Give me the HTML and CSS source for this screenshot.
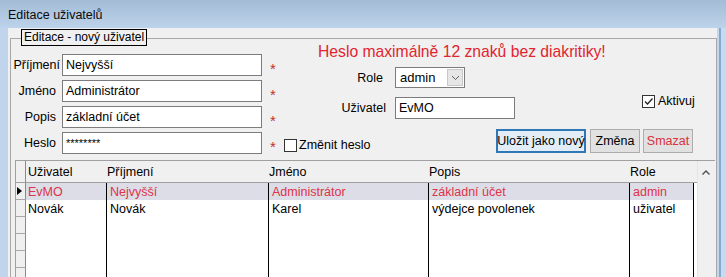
FILE: index.html
```html
<!DOCTYPE html>
<html lang="cs">
<head>
<meta charset="utf-8">
<title>Editace uživatelů</title>
<link rel="stylesheet" href="styles.css">
</head>
<body>
<div class="window">
  <div class="titlebar">Editace uživatelů</div>
  <div class="frame">
    <div class="client">
      <div class="group">
        <div class="legend">Editace - nový uživatel</div>
        <div class="form">
          <div class="left">
            <div class="frow"><span class="flabel tight">Příjmení</span><div class="input w200">Nejvyšší</div><span class="req">*</span></div>
            <div class="frow"><span class="flabel">Jméno</span><div class="input w200">Administrátor</div><span class="req">*</span></div>
            <div class="frow"><span class="flabel">Popis</span><div class="input w200">základní účet</div><span class="req">*</span></div>
            <div class="frow"><span class="flabel">Heslo</span><div class="input w200 pwd">********</div><span class="req">*</span></div>
          </div>
          <div class="right">
            <div class="heading">Heslo maximálně 12 znaků bez diakritiky!</div>
            <div class="rrow role-row">
              <span class="rlabel role-label">Role</span>
              <div class="select">
                <span class="select-val">admin</span>
                <span class="dd-btn"><svg width="9" height="6" viewBox="0 0 9 6"><path d="M1 1 L4.5 4.5 L8 1" fill="none" stroke="#606060" stroke-width="1"/></svg></span>
              </div>
            </div>
            <div class="rrow user-row">
              <span class="rlabel user-label">Uživatel</span>
              <div class="input w120">EvMO</div>
              <label class="chk aktivuj"><span class="box"><svg width="11" height="11" viewBox="0 0 11 11"><path d="M2 5.5 L4.5 8 L9.5 2.5" fill="none" stroke="#222" stroke-width="1.3"/></svg></span><span>Aktivuj</span></label>
            </div>
            <div class="rrow btn-row">
              <label class="chk zmenit"><span class="box"></span><span>Změnit heslo</span></label>
              <div class="buttons">
                <div class="btn primary">Uložit jako nový</div>
                <div class="btn zmena">Změna</div>
                <div class="btn danger">Smazat</div>
              </div>
            </div>
          </div>
        </div>
        <div class="dbwrap">
          <div class="db">
            <div class="hd ind"></div>
            <div class="hd first">Uživatel</div>
            <div class="hd">Příjmení</div>
            <div class="hd">Jméno</div>
            <div class="hd">Popis</div>
            <div class="hd">Role</div>
            <div class="hd"></div>

            <div class="ind"><svg width="5" height="8" viewBox="0 0 5 8"><path d="M0 0 L5 4 L0 8 Z" fill="#000"/></svg></div>
            <div class="cell first sel">EvMO</div>
            <div class="cell sep sel">Nejvyšší</div>
            <div class="cell sep sel">Administrátor</div>
            <div class="cell sep sel">základní účet</div>
            <div class="cell sep last sel">admin</div>
            <div class="cell"></div>

            <div class="ind"></div>
            <div class="cell first">Novák</div>
            <div class="cell sep">Novák</div>
            <div class="cell sep">Karel</div>
            <div class="cell sep">výdejce povolenek</div>
            <div class="cell sep last">uživatel</div>
            <div class="cell"></div>

            <div class="ind"></div><div class="cell first"></div><div class="cell sep"></div><div class="cell sep"></div><div class="cell sep"></div><div class="cell sep last"></div><div class="cell"></div>
            <div class="ind"></div><div class="cell first"></div><div class="cell sep"></div><div class="cell sep"></div><div class="cell sep"></div><div class="cell sep last"></div><div class="cell"></div>
            <div class="ind"></div><div class="cell first"></div><div class="cell sep"></div><div class="cell sep"></div><div class="cell sep"></div><div class="cell sep last"></div><div class="cell"></div>
            <div class="ind"></div><div class="cell first"></div><div class="cell sep"></div><div class="cell sep"></div><div class="cell sep"></div><div class="cell sep last"></div><div class="cell"></div>
          </div>
          <div class="sb"><svg width="8" height="5" viewBox="0 0 8 5"><path d="M0.5 4.5 L4 1 L7.5 4.5" fill="none" stroke="#505050" stroke-width="1.4"/></svg></div>
        </div>
      </div>
    </div>
  </div>
</div>
</body>
</html>
```
FILE: styles.css
```css
* { box-sizing: border-box; }
html, body { margin: 0; padding: 0; }
body {
  width: 726px;
  height: 277px;
  overflow: hidden;
  font-family: "Liberation Sans", Arial, sans-serif;
  font-size: 12.5px;
  color: #000;
  background: #c3d7ee;
}
.window {
  width: 726px;
  height: 277px;
  display: flex;
  flex-direction: column;
}
.titlebar {
  height: 28px;
  flex: none;
  background: linear-gradient(#a3bbd6, #bdd3eb);
  padding: 2px 0 0 8px;
  display: flex;
  align-items: center;
  font-size: 12.5px;
  color: #0a0a0a;
}
.frame {
  flex: 1;
  min-height: 0;
  display: flex;
  padding: 0 9px 0 8px;
  background: #c2d7ee;
  box-shadow: inset -5px 0 0 #c6daf0, inset -7px 0 0 #86a9cf, inset 8px 0 0 #c0d5ec;
}
.client {
  flex: 1;
  min-width: 0;
  background: #f0f0f0;
  display: flex;
  flex-direction: column;
}
.group {
  position: relative;
  flex: 1;
  min-height: 0;
  margin: 10px 0 0 2px;
  border: 1px solid #a8a8a8;
  border-bottom: none;
  display: flex;
  flex-direction: column;
}
.legend {
  position: absolute;
  left: 10px;
  top: -10px;
  height: 17px;
  padding: 0 2px;
  border: 1px solid #000;
  background: #f0f0f0;
  font-size: 12px;
  line-height: 15px;
  white-space: nowrap;
}
.form {
  height: 121px;
  flex: none;
  display: flex;
}
.left {
  width: 269px;
  flex: none;
  padding-top: 15px;
  display: flex;
  flex-direction: column;
  gap: 4px;
}
.frow {
  height: 22px;
  display: flex;
  align-items: center;
}
.flabel {
  width: 51px;
  flex: none;
  text-align: right;
  padding-right: 6px;
  white-space: nowrap;
}
.flabel.tight { padding-right: 2px; }
.input {
  height: 22px;
  flex: none;
  border: 1px solid #7c7c7c;
  background: #fff;
  padding-left: 3px;
  display: flex;
  align-items: center;
  white-space: nowrap;
}
.input.pwd { font-size: 11px; }
.w200 { width: 200px; }
.w120 { width: 120px; }
.req {
  color: #c0312e;
  margin-left: 8px;
  font-size: 15px;
  margin-top: 6px;
}
.right {
  flex: 1;
  display: flex;
  flex-direction: column;
}
.heading {
  margin-top: 4px;
  padding-left: 38px;
  color: #e1252f;
  font-size: 15.7px;
  line-height: 18px;
  white-space: nowrap;
}
.rrow {
  display: flex;
  align-items: center;
}
.role-row { margin-top: 6px; height: 21px; }
.user-row { margin-top: 9px; height: 22px; }
.btn-row { margin-top: 10px; height: 24px; }
.rlabel { text-align: right; flex: none; }
.role-label { width: 103px; margin-right: 12px; }
.user-label { width: 106px; margin-right: 9px; }
.select {
  width: 70px;
  height: 21px;
  border: 1px solid #7c7c7c;
  background: #fff;
  display: flex;
  align-items: stretch;
}
.select-val {
  flex: 1;
  padding-left: 4px;
  display: flex;
  align-items: center;
  font-size: 13px;
}
.dd-btn {
  width: 16px;
  margin: 1px;
  background: #e6e6e6;
  border: 1px solid #c8c8c8;
  display: flex;
  align-items: center;
  justify-content: center;
}
.chk {
  display: flex;
  align-items: center;
  gap: 3px;
  white-space: nowrap;
}
.box {
  width: 13px;
  height: 13px;
  border: 1px solid #333;
  background: #fff;
  display: flex;
  align-items: center;
  justify-content: center;
}
.aktivuj {
  margin-left: 127px;
  align-self: flex-start;
  margin-top: -3px;
}
.zmenit {
  margin-left: 4px;
  align-self: flex-end;
  margin-bottom: 1px;
  gap: 2px;
}
.buttons {
  margin-left: auto;
  margin-right: 23px;
  display: flex;
  height: 24px;
}
.btn {
  height: 24px;
  display: flex;
  align-items: center;
  justify-content: center;
  border: 1px solid #adadad;
  background: #e1e1e1;
  white-space: nowrap;
}
.btn.primary {
  width: 90px;
  border: 2px solid #2f78b5;
  background: #e3edf7;
}
.btn.zmena { width: 50px; margin-left: 4px; }
.btn.danger { width: 50px; margin-left: 3px; color: #d9303c; }
.dbwrap {
  flex: 1;
  min-height: 0;
  display: flex;
  margin: 0 1px 0 4px;
  border-top: 1px solid #a0a0a0;
  border-left: 1px solid #a0a0a0;
  overflow: hidden;
}
.db {
  display: grid;
  grid-template-columns: 10px 80px 162px 160px 201px 65px 3px;
  grid-template-rows: 22px;
  grid-auto-rows: 17px;
  align-content: start;
  background: #fff;
  white-space: nowrap;
}
.hd {
  background: #f0f0f0;
  border-bottom: 1px solid #a0a0a0;
  display: flex;
  align-items: center;
  padding-left: 1px;
}
.hd.first { padding-left: 2px; }
.ind {
  background: #f0f0f0;
  border-right: 1px solid #8a8a8a;
  border-bottom: 1px solid #a8a8a8;
  display: flex;
  align-items: center;
  padding-left: 1px;
}
.hd.ind { border-bottom: 1px solid #a0a0a0; }
.cell {
  display: flex;
  align-items: center;
  padding-left: 3px;
  overflow: hidden;
}
.cell.first { padding-left: 2px; }
.cell.sep { border-left: 1px solid #000; }
.cell.last { border-right: 1px solid #000; }
.cell.sel {
  background: #dcdde7;
  color: #de3349;
}
.sb {
  flex: 1;
  background: #f0f0f0;
  border-left: 1px solid #e4e4e4;
  display: flex;
  justify-content: center;
  align-items: flex-start;
  padding-top: 9px;
  padding-right: 2px;
}
```
